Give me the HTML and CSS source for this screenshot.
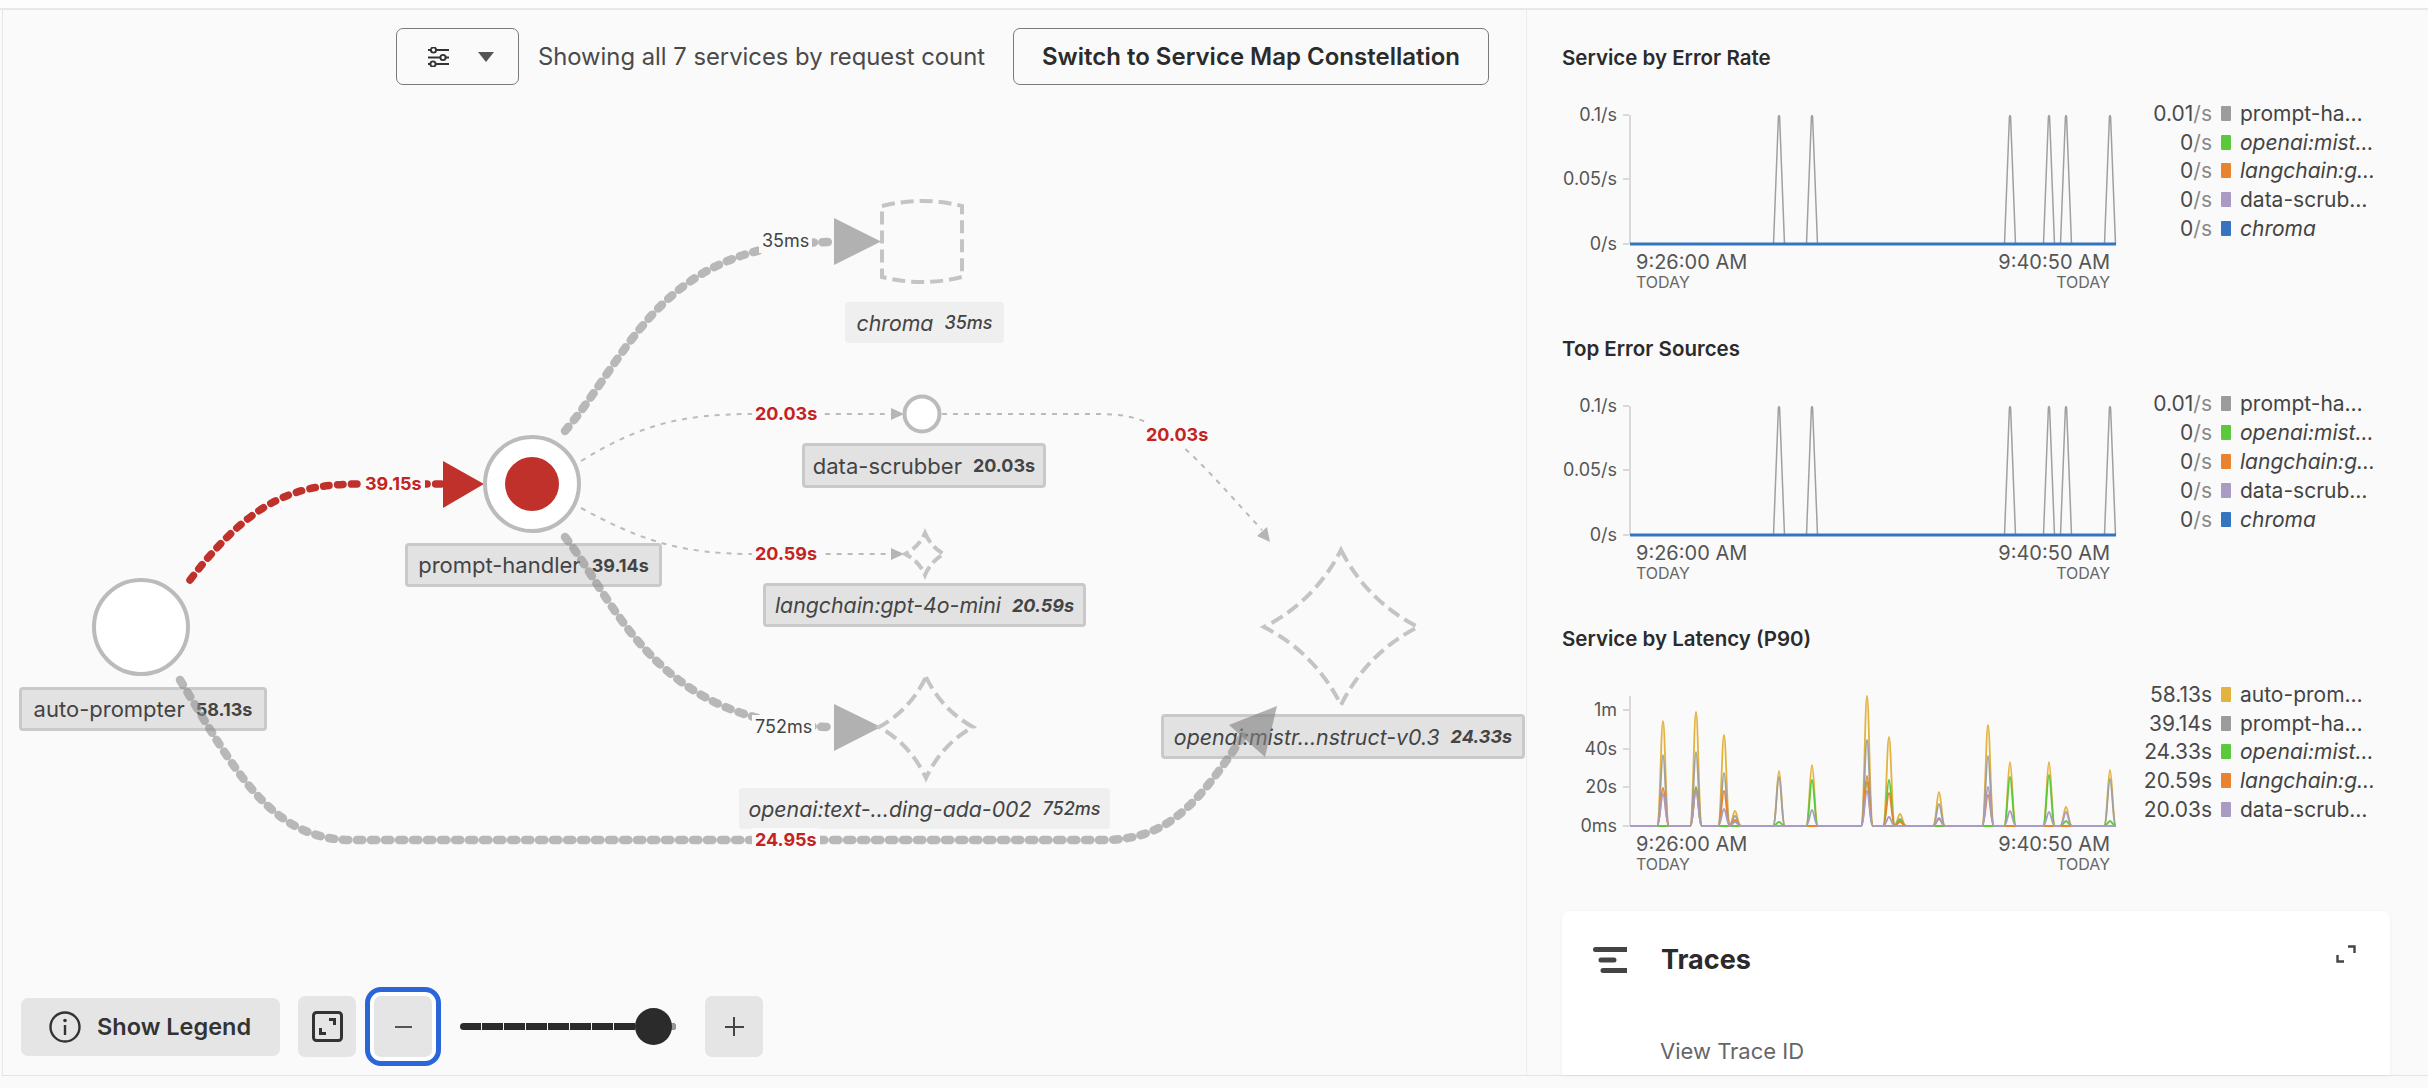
FILE: index.html
```html
<!DOCTYPE html>
<html lang="en">
<head>
    <meta charset="UTF-8">
    <meta name="viewport" content="width=device-width, initial-scale=1.0">
    <title>Service Map</title>
    <link rel="stylesheet" href="styles.css">
    <script src="charts.js" defer></script>
</head>
<body>
    <div class="top-strip"></div>
    <div class="app">
        <main class="map">
            <div class="map-toolbar">
                <button class="outline-button filter-button">
                    <svg class="filter-icon" viewBox="0 0 21 20">
                        <path d="M0 3H21M0 10.5H21M0 17H21"/>
                        <circle cx="5.5" cy="3" r="2.6"/>
                        <circle cx="15" cy="10.5" r="2.6"/>
                        <circle cx="5" cy="17" r="2.6"/>
                    </svg>
                    <span class="caret"></span>
                </button>
                <span class="toolbar-text">Showing all 7 services by request count</span>
                <button class="outline-button switch-button">Switch to Service Map Constellation</button>
            </div>

            <!-- node labels sit under the edges -->
            <div class="node-label faded label-chroma"><em>chroma</em><b><em>35ms</em></b></div>
            <div class="node-label label-scrubber"><span>data-scrubber</span><b>20.03s</b></div>
            <div class="node-label label-prompt"><span>prompt-handler</span><b>39.14s</b></div>
            <div class="node-label label-auto"><span>auto-prompter</span><b>58.13s</b></div>
            <div class="node-label label-langchain"><em>langchain:gpt-4o-mini</em><b><em>20.59s</em></b></div>
            <div class="node-label faded label-embedding"><em>openai:text-…ding-ada-002</em><b><em>752ms</em></b></div>
            <div class="node-label label-mistral"><em>openai:mistr…nstruct-v0.3</em><b><em>24.33s</em></b></div>

            <svg class="map-canvas" viewBox="3 10 1523 1065">
                <g class="edge-thin">
                    <path d="M581,461 C640,425 680,414 754,414 H892"/>
                    <path d="M942,414 H1100 C1160,414 1180,440 1262,530"/>
                    <path d="M581,508 C640,540 680,554 754,554 H892"/>
                </g>
                <g class="arrow-thin">
                    <polygon points="891,408 904,414 891,420"/>
                    <polygon points="891,548 904,554 891,560"/>
                    <polygon points="1270,542 1257,536 1267,527"/>
                </g>
                <g class="edge-thick">
                    <path d="M565,431 C630,355 660,242 834,242"/>
                    <path d="M565,537 C615,600 655,727 834,727"/>
                    <path d="M180,680 C235,770 270,840 352,840 H1102 C1165,840 1195,810 1247,730"/>
                </g>
                <path class="edge-thick edge-red" d="M190,580 C255,495 300,484 362,484 H443"/>
                <polygon class="arrow-thick" points="834,218 881,241.5 834,265"/>
                <polygon class="arrow-thick" points="834,704 881,727 834,751"/>
                <polygon class="arrow-thick" points="1277,706 1229,725 1265,757"/>
                <polygon class="arrow-red" points="443,461 484,484 443,508"/>

                <circle class="node" cx="141" cy="627" r="47"/>
                <circle class="node" cx="532" cy="484" r="47"/>
                <circle class="node-dot" cx="532" cy="484" r="27"/>
                <circle class="node" cx="922" cy="414" r="17.5"/>

                <path class="node-dashed" d="M882,206 Q922,196 962,206 V277 Q922,287 882,277 Z"/>
                <path class="node-dashed dash-small" d="M925,533 Q931,547 944,554 Q931,561 925,575 Q919,561 905,554 Q919,547 925,533 Z"/>
                <path class="node-dashed" d="M926,677 Q942,710 973,727 Q942,744 926,778 Q910,744 879,727 Q910,710 926,677 Z"/>
                <path class="node-dashed" d="M1341,550 Q1367,601 1418,627 Q1367,653 1341,705 Q1315,653 1264,627 Q1315,601 1341,550 Z"/>
            </svg>

            <span class="edge-label red label-e1">39.15s</span>
            <span class="edge-label label-e2">35ms</span>
            <span class="edge-label red label-e3">20.03s</span>
            <span class="edge-label red label-e4">20.03s</span>
            <span class="edge-label red label-e5">20.59s</span>
            <span class="edge-label label-e6">752ms</span>
            <span class="edge-label red label-e7">24.95s</span>

            <div class="map-controls">
                <button class="control-button legend-button">
                    <svg class="legend-icon" viewBox="0 0 32 32">
                        <circle cx="16" cy="16" r="14.5"/>
                        <path d="M16 14V24"/>
                        <circle class="legend-dot" cx="16" cy="9.5" r="1.8"/>
                    </svg>
                    Show Legend
                </button>
                <button class="control-button square-button">
                    <svg class="fit-icon" viewBox="0 0 31 31">
                        <rect x="1.5" y="1.5" width="28" height="28" rx="3"/>
                        <path d="M17 8.5H22.5V14M8.5 17V22.5H14"/>
                    </svg>
                </button>
                <button class="control-button square-button zoom-out"><span class="minus"></span></button>
                <div class="zoom-slider"><span class="zoom-thumb"></span></div>
                <button class="control-button square-button"><span class="plus"></span></button>
            </div>
        </main>

        <aside class="side">
            <section class="chart-block">
                <h3>Service by Error Rate</h3>
                <div class="chart-body">
                    <svg class="plot" data-chart="errors"></svg>
                    <ul class="legend">
                        <li><span class="val">0.01<i>/s</i></span><span class="swatch gray"></span><span>prompt-ha…</span></li>
                        <li><span class="val">0<i>/s</i></span><span class="swatch green"></span><em>openai:mist…</em></li>
                        <li><span class="val">0<i>/s</i></span><span class="swatch orange"></span><em>langchain:g…</em></li>
                        <li><span class="val">0<i>/s</i></span><span class="swatch purple"></span><span>data-scrub…</span></li>
                        <li><span class="val">0<i>/s</i></span><span class="swatch blue"></span><em>chroma</em></li>
                    </ul>
                </div>
            </section>
            <section class="chart-block">
                <h3>Top Error Sources</h3>
                <div class="chart-body">
                    <svg class="plot" data-chart="errors"></svg>
                    <ul class="legend">
                        <li><span class="val">0.01<i>/s</i></span><span class="swatch gray"></span><span>prompt-ha…</span></li>
                        <li><span class="val">0<i>/s</i></span><span class="swatch green"></span><em>openai:mist…</em></li>
                        <li><span class="val">0<i>/s</i></span><span class="swatch orange"></span><em>langchain:g…</em></li>
                        <li><span class="val">0<i>/s</i></span><span class="swatch purple"></span><span>data-scrub…</span></li>
                        <li><span class="val">0<i>/s</i></span><span class="swatch blue"></span><em>chroma</em></li>
                    </ul>
                </div>
            </section>
            <section class="chart-block">
                <h3>Service by Latency (P90)</h3>
                <div class="chart-body">
                    <svg class="plot" data-chart="latency"></svg>
                    <ul class="legend">
                        <li><span class="val">58.13s</span><span class="swatch yellow"></span><span>auto-prom…</span></li>
                        <li><span class="val">39.14s</span><span class="swatch gray"></span><span>prompt-ha…</span></li>
                        <li><span class="val">24.33s</span><span class="swatch green"></span><em>openai:mist…</em></li>
                        <li><span class="val">20.59s</span><span class="swatch orange"></span><em>langchain:g…</em></li>
                        <li><span class="val">20.03s</span><span class="swatch purple"></span><span>data-scrub…</span></li>
                    </ul>
                </div>
            </section>
            <section class="traces-card">
                <div class="traces-head">
                    <svg class="traces-icon" viewBox="0 0 34 26">
                        <path d="M2.5 2.5H34M8 13H21M10 23.5H34"/>
                    </svg>
                    <h2>Traces</h2>
                    <svg class="expand-icon" viewBox="0 0 20 18">
                        <path d="M12 1.5H18.5V8M1.5 10V16.5H8"/>
                    </svg>
                </div>
                <div class="traces-link">View Trace ID</div>
            </section>
        </aside>
    </div>
</body>
</html>
```

FILE: styles.css
```css
* {
    box-sizing: border-box;
}
body {
    margin: 0;
    height: 1088px;
    overflow: hidden;
    background-color: #fafafa;
    color: #444;
    font-family: Inter, "Liberation Sans", sans-serif;
}
button {
    font-family: inherit;
    color: inherit;
    padding: 0;
    cursor: pointer;
}
.top-strip {
    height: 10px;
    border-bottom: 2px solid #e8e8e8;
    background-color: #fdfdfd;
}
.app {
    display: flex;
    height: 1066px;
    margin-left: 2px;
    border-left: 1px solid #e6e6e6;
    border-bottom: 1px solid #e4e4e4;
}

/* service map */
.map {
    position: relative;
    display: flex;
    flex-direction: column;
    justify-content: space-between;
    width: 1524px;
    flex: none;
    border-right: 1px solid #ececec;
}
.map-toolbar {
    display: flex;
    align-items: center;
    justify-content: flex-end;
    padding: 18px 37px 0 0;
}
.outline-button {
    height: 57px;
    border: 1px solid #7a7a7a;
    border-radius: 7px;
    background: transparent;
}
.filter-button {
    display: flex;
    align-items: center;
    justify-content: center;
    gap: 29px;
    width: 123px;
    padding-left: 8px;
}
.filter-icon {
    width: 21px;
    height: 20px;
    fill: #fafafa;
    stroke: #333;
    stroke-width: 1.9;
}
.caret {
    border-left: 8px solid transparent;
    border-right: 8px solid transparent;
    border-top: 10px solid #555;
}
.toolbar-text {
    margin: 0 28px 0 19px;
    font-size: 23.8px;
    color: #4a4a4a;
    white-space: nowrap;
}
.switch-button {
    width: 476px;
    font-size: 24px;
    font-weight: 600;
    color: #2b2b2b;
    white-space: nowrap;
}
.map-canvas {
    position: absolute;
    left: 0;
    top: 0;
    width: 1523px;
    height: 1065px;
    pointer-events: none;
}
.edge-thin path {
    fill: none;
    stroke: #bbb;
    stroke-width: 2;
    stroke-dasharray: 5 6;
}
.arrow-thin polygon {
    fill: #b5b5b5;
}
/* see-through, the label text shows under edges and arrows */
.edge-thick, .edge-thick path {
    fill: none;
    stroke: #8c8c8c;
    stroke-width: 8.5;
    stroke-linecap: round;
    stroke-dasharray: 5.5 8.5;
    opacity: 0.6;
}
.edge-thick path {
    opacity: 1;
}
.edge-red {
    stroke: #c1312b;
    stroke-width: 7.5;
    opacity: 1;
}
.arrow-thick {
    fill: #808080;
    opacity: 0.6;
}
.arrow-red {
    fill: #c1312b;
}
.node {
    fill: #fff;
    stroke: #bbb;
    stroke-width: 4;
}
.node-dot {
    fill: #c1312b;
}
.node-dashed {
    fill: none;
    stroke: #c4c4c4;
    stroke-width: 4;
    stroke-dasharray: 13 6;
}
.dash-small {
    stroke-dasharray: 11 5;
}

/* labels under nodes */
.node-label {
    position: absolute;
    display: flex;
    align-items: center;
    justify-content: center;
    gap: 11px;
    border: 3px solid #c9c9c9;
    border-radius: 4px;
    background-color: #e2e2e2;
    font-size: 22px;
    white-space: nowrap;
}
.node-label em {
    font-size: 21.3px;
}
.node-label b {
    font-size: 18px;
    font-weight: 700;
}
.node-label b em {
    font-size: 18px;
}
.node-label.faded {
    border: none;
    background-color: #efefef;
}
.node-label.faded b {
    font-weight: 500;
}
.label-chroma { left: 842px; top: 292px; width: 159px; height: 41px; }
.label-scrubber { left: 799px; top: 433px; width: 244px; height: 45px; }
.label-prompt { left: 402px; top: 533px; width: 257px; height: 44px; }
.label-auto { left: 16px; top: 677px; width: 248px; height: 44px; }
.label-langchain { left: 760px; top: 573px; width: 323px; height: 44px; }
.label-embedding { left: 736px; top: 778px; width: 371px; height: 41px; }
.label-mistral { left: 1158px; top: 704px; width: 364px; height: 45px; }

/* labels on edges */
.edge-label {
    position: absolute;
    height: 24px;
    padding: 0 3px;
    line-height: 24px;
    font-size: 18px;
    background-color: #fafafa;
    white-space: nowrap;
}
.edge-label.red {
    color: #c4241f;
    font-weight: 700;
}
.label-e1 { left: 359px; top: 462px; }
.label-e2 { left: 756px; top: 219px; }
.label-e3 { left: 749px; top: 392px; }
.label-e4 { left: 1140px; top: 413px; }
.label-e5 { left: 749px; top: 532px; }
.label-e6 { left: 749px; top: 705px; }
.label-e7 { left: 749px; top: 818px; }

/* zoom and legend controls */
.map-controls {
    display: flex;
    align-items: center;
    padding: 0 0 18px 18px;
}
.control-button {
    border: none;
    border-radius: 7px;
    background-color: #e5e5e5;
}
.legend-button {
    display: flex;
    align-items: center;
    gap: 16px;
    width: 259px;
    height: 58px;
    margin-right: 18px;
    padding-left: 28px;
    font-size: 23.5px;
    font-weight: 600;
    color: #333;
}
.legend-icon {
    width: 32px;
    height: 32px;
    fill: none;
    stroke: #333;
    stroke-width: 2.4;
}
.legend-dot {
    fill: #333;
    stroke: none;
}
.square-button {
    display: flex;
    align-items: center;
    justify-content: center;
    width: 58px;
    height: 61px;
}
.fit-icon {
    width: 31px;
    height: 31px;
    fill: none;
    stroke: #333;
    stroke-width: 3;
}
.zoom-out {
    margin-left: 18px;
    outline: 5px solid #2a66d9;
    outline-offset: 4px;
    box-shadow: 0 0 0 4px #fff;
}
.minus {
    width: 17px;
    height: 2px;
    background-color: #555;
}
.plus {
    position: relative;
    width: 19px;
    height: 2px;
    background-color: #444;
}
.plus::after {
    content: "";
    position: absolute;
    left: 8.5px;
    top: -8.5px;
    width: 2px;
    height: 19px;
    background-color: #444;
}
.zoom-slider {
    position: relative;
    width: 216px;
    height: 7px;
    margin: 0 29px 0 28px;
    border-radius: 4px;
    background: repeating-linear-gradient(90deg, #2b2b2b 0, #2b2b2b 21px, #fafafa 21px, #fafafa 22px);
}
.zoom-slider::after {
    content: "";
    position: absolute;
    right: 0;
    top: 0;
    width: 22px;
    height: 7px;
    border-radius: 0 4px 4px 0;
    background-color: #999;
}
.zoom-thumb {
    position: absolute;
    left: 175px;
    top: -15px;
    width: 37px;
    height: 37px;
    border-radius: 50%;
    background-color: #2b2b2b;
    z-index: 1;
}

/* right side charts */
.side {
    flex: 1;
    min-width: 0;
    padding-left: 35px;
}
.chart-block {
    height: 290.5px;
    padding-top: 36px;
}
.chart-block h3 {
    margin: 0;
    height: 24px;
    line-height: 24px;
    font-size: 20.5px;
    font-weight: 600;
    color: #2b2b2b;
}
.chart-body {
    display: flex;
    margin-top: 29px;
}
.plot {
    width: 578px;
    height: 200px;
    flex: none;
}
.plot text {
    fill: #555;
    font-size: 18px;
}
.plot .time {
    font-size: 20px;
}
.plot .today {
    font-size: 16px;
    fill: #666;
}
.plot line {
    stroke: #d9d9d9;
    stroke-width: 2;
}
.plot path {
    fill: none;
    stroke-width: 1.5;
    stroke-linejoin: round;
}
.legend {
    margin: 0;
    padding: 0;
    list-style: none;
    font-size: 21px;
}
.legend li {
    display: flex;
    align-items: center;
    height: 28.8px;
    white-space: nowrap;
}
.legend em, .legend li > span:last-child {
    color: #444;
}
.val {
    width: 72px;
    text-align: right;
    color: #4a4a4a;
}
.val i {
    font-style: normal;
    color: #888;
}
.swatch {
    width: 10px;
    height: 15px;
    margin: 0 9px;
    border-radius: 1px;
}
.gray { background-color: #9c9c9c; }
.green { background-color: #5cc83c; }
.orange { background-color: #e8832f; }
.purple { background-color: #a99bc3; }
.blue { background-color: #3575c0; }
.yellow { background-color: #e2b33f; }

/* traces card */
.traces-card {
    height: 164px;
    width: 828px;
    margin-top: 29px;
    border-radius: 8px 8px 0 0;
    background-color: #fff;
    box-shadow: 0 1px 4px rgba(0,0,0,0.05);
    overflow: hidden;
}
.traces-head {
    display: flex;
    align-items: center;
    padding: 33px 34px 0 31px;
}
.traces-head h2 {
    flex: 1;
    margin: 0 0 0 34px;
    line-height: 32px;
    font-size: 27px;
    font-weight: 700;
    color: #2b2b2b;
}
.traces-icon {
    width: 34px;
    height: 26px;
    fill: none;
    stroke: #444;
    stroke-width: 5;
    stroke-linecap: round;
}
.expand-icon {
    width: 20px;
    height: 18px;
    margin-top: -12px;
    fill: none;
    stroke: #444;
    stroke-width: 2.4;
}
.traces-link {
    margin: 61px 0 0 98px;
    font-size: 22px;
    line-height: 28px;
    color: #666;
}
```

FILE: charts.js
```js
// small hand-rolled charts, no library
const NS = 'http://www.w3.org/2000/svg';
const COLORS = {
    yellow: '#e2b33f',
    gray: '#a0a0a0',
    green: '#5cc83c',
    orange: '#e8832f',
    purple: '#a99bc3',
    blue: '#3575c0'
};

function add(svg, tag, attrs, text) {
    const el = document.createElementNS(NS, tag);
    for (const key in attrs) el.setAttribute(key, attrs[key]);
    if (text) el.textContent = text;
    svg.appendChild(el);
    return el;
}

function drawFrame(svg, base, ticks) {
    add(svg, 'line', { x1: 68, y1: 16, x2: 68, y2: base });
    ticks.forEach(function (t) {
        add(svg, 'line', { x1: 61, y1: t[1], x2: 67, y2: t[1] });
        add(svg, 'text', { x: 55, y: t[1] + 6, 'text-anchor': 'end' }, t[0]);
    });
    add(svg, 'text', { x: 74, y: base + 25, class: 'time' }, '9:26:00 AM');
    add(svg, 'text', { x: 74, y: base + 44, class: 'today' }, 'TODAY');
    add(svg, 'text', { x: 548, y: base + 25, class: 'time', 'text-anchor': 'end' }, '9:40:50 AM');
    add(svg, 'text', { x: 548, y: base + 44, class: 'today', 'text-anchor': 'end' }, 'TODAY');
}

// spikes on a flat baseline, bell shaped when smooth is set
function spikes(list, base, half, smooth) {
    let d = 'M68,' + base;
    list.forEach(function (p) {
        const x = p[0], top = p[1];
        d += ' L' + (x - half) + ',' + base;
        if (smooth) {
            d += ' C' + (x - 3) + ',' + base + ' ' + (x - 2) + ',' + top + ' ' + x + ',' + top;
            d += ' C' + (x + 2) + ',' + top + ' ' + (x + 3) + ',' + base + ' ' + (x + half) + ',' + base;
        } else {
            d += ' L' + (x - 0.6) + ',' + (top + 2) + ' Q' + x + ',' + (top - 1) + ' ' + (x + 0.6) + ',' + (top + 2);
            d += ' L' + (x + half) + ',' + base;
        }
    });
    return d + ' L554,' + base;
}

function drawErrors(svg) {
    const base = 145;
    drawFrame(svg, base, [['0.1/s', 16], ['0.05/s', 80], ['0/s', base]]);
    const peaks = [217, 250, 448, 487, 504, 548].map(function (x) { return [x, 16]; });
    add(svg, 'path', { d: spikes(peaks, base, 5.5, false), stroke: COLORS.gray });
    add(svg, 'path', { d: 'M68,' + base + ' L554,' + base, stroke: COLORS.blue, style: 'stroke-width:3' });
}

function drawLatency(svg) {
    const base = 146;
    drawFrame(svg, base, [['1m', 30], ['40s', 69], ['20s', 107], ['0ms', base]]);
    // x, then peak top of each series (null = stays flat)
    const rows = [
        [101, 41, 75, null, 108, 114],
        [134, 32, 72, 107, 109, 111],
        [162, 55, 93, null, 111, 129],
        [173, 131, 136, null, 140, 142],
        [217, 91, 97, 142, null, null],
        [250, 85, null, 100, null, 130],
        [305, 16, 60, 102, 96, 111],
        [327, 57, null, 100, 113, 137],
        [338, 134, 139, 140, 142, null],
        [377, 112, 124, null, 139, 138],
        [426, 45, 76, null, 115, 107],
        [448, 82, null, 97, null, 131],
        [487, 82, null, 95, null, 132],
        [504, 127, null, 141, null, 132],
        [548, 90, 99, 141, null, null]
    ];
    ['yellow', 'gray', 'green', 'orange', 'purple'].forEach(function (name, i) {
        const peaks = rows.filter(function (r) { return r[i + 1] !== null; }).map(function (r) {
            return [r[0], r[i + 1]];
        });
        add(svg, 'path', { d: spikes(peaks, base, 6, true), stroke: COLORS[name], style: 'stroke-width:1.8' });
    });
}

document.querySelectorAll('.plot').forEach(function (svg) {
    svg.setAttribute('viewBox', '0 0 578 200');
    if (svg.dataset.chart === 'latency') drawLatency(svg);
    else drawErrors(svg);
});
```
